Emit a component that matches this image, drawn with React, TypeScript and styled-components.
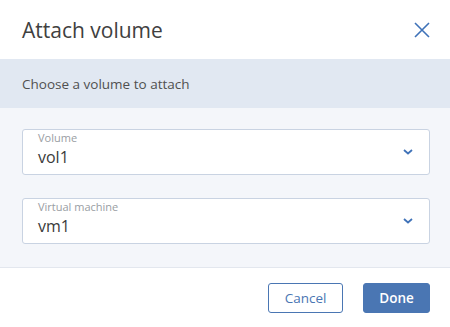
import styled, { createGlobalStyle } from "styled-components";

const Global = createGlobalStyle`
  html, body { margin: 0; padding: 0; background: #ffffff; }
  body { font-family: "Open Sans", "Noto Sans", sans-serif; color: #333; }
`;

const Dialog = styled.div`
  width: 450px;
  height: 327px;
  display: flex;
  flex-direction: column;
  background: #fff;
`;

const Header = styled.div`
  height: 59px;
  display: flex;
  align-items: center;
  justify-content: space-between;
  padding: 0 18px 0 22px;
  box-sizing: border-box;
`;

const Title = styled.h1`
  margin: 0;
  font-size: 21px;
  font-weight: 400;
  color: #404040;
`;

const CloseButton = styled.button`
  border: 0;
  background: none;
  padding: 0;
  width: 20px;
  height: 20px;
  display: flex;
  align-items: center;
  justify-content: center;
  cursor: pointer;
`;

const Banner = styled.div`
  height: 49px;
  background: #e1e8f2;
  display: flex;
  align-items: center;
  padding: 0 22px;
  font-size: 13.5px;
  color: #505050;
`;

const Body = styled.div`
  flex: 0 0 160px;
  background: #f4f6fa;
  border-bottom: 1px solid #e3e7ee;
  padding: 21px 20px 0 22px;
  box-sizing: border-box;
  display: flex;
  flex-direction: column;
  gap: 23px;
`;

const Field = styled.div`
  height: 46px;
  background: #fff;
  border: 1px solid #c9d3e2;
  border-radius: 3px;
  box-sizing: border-box;
  display: flex;
  align-items: center;
  padding: 0 16px 0 15px;
`;

const FieldText = styled.div`
  flex: 1;
  display: flex;
  flex-direction: column;
`;

const Label = styled.span`
  font-size: 11px;
  color: #999da3;
  line-height: 12px;
  margin-top: -5px;
`;

const Value = styled.span`
  font-size: 16px;
  color: #3a3a3a;
  line-height: 20px;
  margin-top: 3px;
`;

const Footer = styled.div`
  flex: 1;
  display: flex;
  justify-content: flex-end;
  align-items: center;
  gap: 20px;
  padding: 0 20px 0 0;
`;

const Button = styled.button<{ primary?: boolean }>`
  height: 30px;
  border-radius: 3px;
  font-family: inherit;
  font-size: 13.5px;
  font-weight: ${(p) => (p.primary ? 600 : 400)};
  padding: 0;
  width: ${(p) => (p.primary ? "67px" : "75px")};
  border: 1px solid #4a76b3;
  background: ${(p) => (p.primary ? "#4a76b3" : "#fff")};
  color: ${(p) => (p.primary ? "#fff" : "#4a76b3")};
  cursor: pointer;
`;

const Chevron = () => (
  <svg width="10" height="6" viewBox="0 0 10 6">
    <path d="M1 1l4 3.5L9 1" fill="none" stroke="#3f72b8" strokeWidth="1.8" />
  </svg>
);

const fields = [
  { label: "Volume", value: "vol1" },
  { label: "Virtual machine", value: "vm1" },
];

export default function App() {
  return (
    <>
      <Global />
      <Dialog>
        <Header>
          <Title>Attach volume</Title>
          <CloseButton aria-label="Close">
            <svg width="16" height="16" viewBox="0 0 16 16">
              <path d="M1 1l14 14M15 1L1 15" stroke="#3f72b8" strokeWidth="1.6" />
            </svg>
          </CloseButton>
        </Header>
        <Banner>Choose a volume to attach</Banner>
        <Body>
          {fields.map((f) => (
            <Field key={f.label}>
              <FieldText>
                <Label>{f.label}</Label>
                <Value>{f.value}</Value>
              </FieldText>
              <Chevron />
            </Field>
          ))}
        </Body>
        <Footer>
          <Button>Cancel</Button>
          <Button primary>Done</Button>
        </Footer>
      </Dialog>
    </>
  );
}
